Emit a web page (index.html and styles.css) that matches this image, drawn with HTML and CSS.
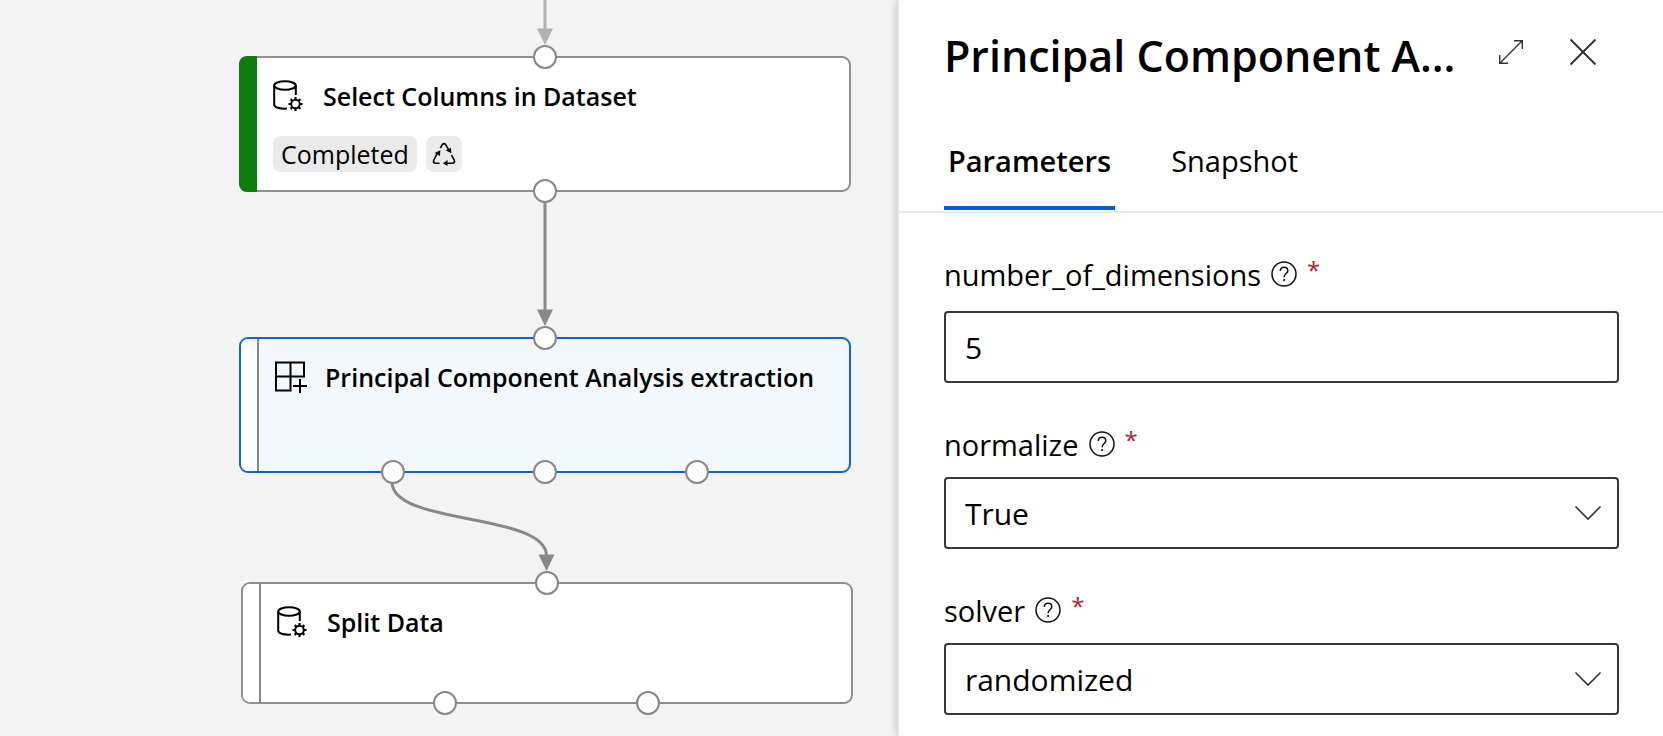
FILE: index.html
```html
<!DOCTYPE html>
<html lang="en">
<head>
<meta charset="utf-8">
<meta name="viewport" content="width=device-width, initial-scale=1">
<title>Pipeline designer</title>
<link rel="stylesheet" href="styles.css">
</head>
<body>
<svg class="sprite" aria-hidden="true">
  <symbol id="icon-data" viewBox="0 0 32 32">
    <g fill="none" stroke="#000" stroke-width="2">
      <ellipse cx="12" cy="5.500" rx="10.800" ry="4.300"/>
      <path d="M1.200 5.500V24.500C1.200 27.500 6 29 14 28.600M22.800 5.500V15"/>
      <circle cx="22.500" cy="24" r="4.300"/>
      <path stroke-width="2.200" d="M22.500 19.500V17M22.500 28.500V31M18 24H15.500M27 24H29.500M19.300 20.800L17.600 19.100M25.700 27.200L27.400 28.900M19.300 27.200L17.600 28.900M25.700 20.800L27.400 19.100"/>
    </g>
  </symbol>
  <symbol id="icon-help" viewBox="0 0 26 26">
    <circle cx="13" cy="13" r="12" fill="none" stroke="#111" stroke-width="1.500"/>
    <path d="M9.300 10C9.300 7.600 10.900 6.200 13.100 6.200S16.800 7.500 16.800 9.700C16.800 12.400 13.100 12.700 13.100 16.200" fill="none" stroke="#111" stroke-width="1.500"/>
    <circle cx="13.100" cy="19" r="1.100" fill="#111"/>
  </symbol>
  <symbol id="icon-chevron" viewBox="0 0 28 16">
    <path d="M1.500 1.500L14 14L26.500 1.500" fill="none" stroke="#333" stroke-width="1.600"/>
  </symbol>
</svg>

<div class="designer">
  <main class="canvas">
    <svg class="wires" aria-hidden="true">
      <path class="wire wire-light" d="M545 0V30"/>
      <path class="head-light" d="M537 28.500H553L545 45Z"/>
      <path class="wire" d="M545 200V312"/>
      <path class="head" d="M537 309.500H553L545 326Z"/>
      <path class="wire" d="M392 482C392 526 546.500 512 546.500 556"/>
      <path class="head" d="M538.500 554.500H554.500L546.500 571Z"/>
    </svg>

    <section class="node node-select">
      <span class="strip strip-done"></span>
      <div class="node-body">
        <div class="node-head">
          <svg class="node-icon" aria-hidden="true"><use href="#icon-data"/></svg>
          <h2 class="node-title">Select Columns in Dataset</h2>
        </div>
        <div class="badges">
          <span class="badge">Completed</span>
          <span class="badge badge-icon">
            <svg class="recycle" viewBox="0 0 24 24" aria-hidden="true">
              <g fill="none" stroke="#000" stroke-width="1.600">
                <path d="M8.300 6L10.300 2.600Q12 .6 13.700 2.600L17 8.400"/>
                <path d="M5.700 10.600L1.700 18.200Q.8 21 3.600 21.300H7.500"/>
                <path d="M19.500 13.200L22.300 18.200Q23.200 21 20.400 21.300H13"/>
              </g>
              <path d="M13.700 8.300L19 5.700L19.300 11.200ZM2.700 11L8.300 8.300L8 14ZM15.500 18V24L11 21.300Z"/>
            </svg>
          </span>
        </div>
      </div>
      <i class="port port-top at-mid"></i>
      <i class="port port-bottom at-mid"></i>
    </section>

    <section class="node node-pca">
      <span class="strip"></span>
      <div class="node-body">
        <div class="node-head">
          <svg class="node-icon" viewBox="0 0 32 32" aria-hidden="true">
            <path d="M1 1.500H29V15.500H1M1 .5V29.500H15.500V1.500M1 29.500V15.500M25 18V32M18 25H32" fill="none" stroke="#000" stroke-width="2"/>
          </svg>
          <h2 class="node-title">Principal Component Analysis extraction</h2>
        </div>
      </div>
      <i class="port port-top at-mid"></i>
      <i class="port port-bottom at-quarter"></i>
      <i class="port port-bottom at-mid"></i>
      <i class="port port-bottom at-three-quarters"></i>
    </section>

    <section class="node node-split">
      <span class="strip"></span>
      <div class="node-body">
        <div class="node-head">
          <svg class="node-icon" aria-hidden="true"><use href="#icon-data"/></svg>
          <h2 class="node-title">Split Data</h2>
        </div>
      </div>
      <i class="port port-top at-mid"></i>
      <i class="port port-bottom at-third"></i>
      <i class="port port-bottom at-two-thirds"></i>
    </section>
  </main>

  <aside class="panel">
    <header class="panel-head">
      <h1 class="panel-title">Principal Component A...</h1>
      <button class="icon-button" type="button" aria-label="Expand">
        <svg width="26" height="26" viewBox="0 0 26 26" aria-hidden="true">
          <path d="M2 24L24 2M16 1.700H24.300V10M1.700 16V24.300H10" fill="none" stroke="#333" stroke-width="1.400"/>
        </svg>
      </button>
      <button class="icon-button" type="button" aria-label="Close">
        <svg width="28" height="28" viewBox="0 0 28 28" aria-hidden="true">
          <path d="M1.500 1.500L26.500 26.500M26.500 1.500L1.500 26.500" fill="none" stroke="#333" stroke-width="2"/>
        </svg>
      </button>
    </header>
    <nav class="tabs" role="tablist">
      <button class="tab tab-active" type="button" role="tab" aria-selected="true">Parameters</button>
      <button class="tab" type="button" role="tab" aria-selected="false">Snapshot</button>
    </nav>
    <form class="fields">
      <div class="field field-text">
        <div class="label-row">
          <label for="dimensions">number_of_dimensions</label>
          <svg class="help" aria-hidden="true"><use href="#icon-help"/></svg>
          <span class="required">*</span>
        </div>
        <input class="control" id="dimensions" type="text" value="5">
      </div>
      <div class="field">
        <div class="label-row">
          <label for="normalize">normalize</label>
          <svg class="help" aria-hidden="true"><use href="#icon-help"/></svg>
          <span class="required">*</span>
        </div>
        <div class="select-wrap">
          <select class="control" id="normalize"><option>True</option><option>False</option></select>
          <svg class="chevron" aria-hidden="true"><use href="#icon-chevron"/></svg>
        </div>
      </div>
      <div class="field">
        <div class="label-row">
          <label for="solver">solver</label>
          <svg class="help" aria-hidden="true"><use href="#icon-help"/></svg>
          <span class="required">*</span>
        </div>
        <div class="select-wrap">
          <select class="control" id="solver"><option>randomized</option><option>full</option></select>
          <svg class="chevron" aria-hidden="true"><use href="#icon-chevron"/></svg>
        </div>
      </div>
    </form>
  </aside>
</div>
</body>
</html>
```

FILE: styles.css
```css
* {
  box-sizing: border-box;
}

body {
  margin: 0;
  color: #000;
  font-family: "Segoe UI", "Open Sans", "Noto Sans", sans-serif;
}

h1,
h2 {
  margin: 0;
  font-weight: 600;
}

button,
input,
select {
  font: inherit;
  color: inherit;
}

.sprite {
  position: absolute;
  width: 0;
  height: 0;
}

.designer {
  display: flex;
  height: 100vh;
  overflow: hidden;
}

/* Canvas */
.canvas {
  position: relative;
  flex: 54;
  min-width: 0;
  background: #f3f3f3;
}

.wires {
  position: absolute;
  inset: 0;
  width: 100%;
  height: 100%;
}

.wire {
  fill: none;
  stroke: #8a8886;
  stroke-width: 3;
}

.wire-light {
  stroke: #b3b2b0;
}

.head {
  fill: #8a8886;
}

.head-light {
  fill: #b3b2b0;
}

.node {
  position: absolute;
  display: flex;
  width: 612px;
  min-height: 136px;
  border: 2px solid #8f8e8c;
  border-radius: 9px;
  background: #fff;
}

.node-select {
  left: 239px;
  top: 56px;
}

.node-pca {
  left: 239px;
  top: 337px;
  border-color: #0f62da;
  background: #f3f8fc;
}

.node-split {
  left: 241px;
  top: 582px;
  min-height: 122px;
}

.strip {
  width: 18px;
  border-right: 2px solid #8a8886;
  border-radius: 7px 0 0 7px;
  background: #fff;
}

.strip-done {
  margin: -2px 0 -2px -2px;
  border: 0;
  border-radius: 8px 0 0 8px;
  background: #107c10;
}

.node-body {
  flex: 1;
  padding: 18px 16px 0;
}

.node-head {
  display: flex;
  align-items: center;
  gap: 18px;
  height: 40px;
}

.node-icon {
  width: 32px;
  height: 32px;
}

.node-title {
  font-size: 25px;
  line-height: 40px;
  white-space: nowrap;
}

.badges {
  display: flex;
  gap: 9px;
  margin-top: 20px;
}

.badge {
  padding: 0 8px;
  border-radius: 8px;
  background: #eaeaea;
  font-size: 25px;
  line-height: 36px;
}

.badge-icon {
  display: grid;
  place-items: center;
  width: 36px;
  padding: 0;
}

.recycle {
  width: 24px;
  height: 24px;
}

.port {
  position: absolute;
  width: 24px;
  height: 24px;
  margin: -13px -12px;
  border: 2px solid #8a8886;
  border-radius: 50%;
  background: #fff;
}

.port-top {
  top: 0;
}

.port-bottom {
  bottom: 0;
}

.at-quarter {
  left: 25%;
}

.at-third {
  left: 33.3%;
}

.at-mid {
  left: 50%;
}

.at-two-thirds {
  left: 66.6%;
}

.at-three-quarters {
  left: 75%;
}

/* Panel */
.panel {
  position: relative;
  flex: 46;
  min-width: 0;
  border-left: 2px solid #e4e4e4;
  background: #fff;
  box-shadow: 0 0 8px rgba(0, 0, 0, 0.25);
}

.panel-head {
  display: flex;
  align-items: flex-start;
  gap: 32px;
  padding: 24px 60px 0 45px;
}

.panel-title {
  flex: 1;
  overflow: hidden;
  font-size: 43px;
  line-height: 64px;
  white-space: nowrap;
}

.icon-button {
  display: grid;
  place-items: center;
  width: 40px;
  height: 56px;
  padding: 0;
  border: 0;
  background: none;
}

.tabs {
  display: flex;
  gap: 52px;
  margin-top: 40px;
  padding: 0 45px;
  border-bottom: 2px solid #eaeaea;
}

.tab {
  height: 82px;
  margin-bottom: 1px;
  padding: 0 4px 12px;
  border: 0;
  border-bottom: 4px solid transparent;
  background: none;
  font-size: 29px;
  line-height: 40px;
}

.tab-active {
  border-color: #015cda;
  font-weight: 600;
}

.fields {
  padding: 0 44px 0 45px;
}

.field {
  padding-top: 41px;
}

.label-row {
  display: flex;
  align-items: center;
  gap: 10px;
  height: 40px;
  margin-bottom: 13px;
  font-size: 29px;
}

.field-text .label-row {
  margin-bottom: 17px;
}

.help {
  width: 26px;
  height: 26px;
}

.required {
  align-self: flex-start;
  color: #a4262c;
  font-size: 24px;
  line-height: 32px;
}

.control {
  display: block;
  width: 100%;
  height: 72px;
  padding: 0 19px;
  border: 2px solid #373737;
  border-radius: 4px;
  background: #fff;
  font-size: 30px;
  appearance: none;
}

.select-wrap {
  position: relative;
}

.chevron {
  position: absolute;
  top: 28px;
  right: 17px;
  width: 28px;
  height: 16px;
  pointer-events: none;
}
```
